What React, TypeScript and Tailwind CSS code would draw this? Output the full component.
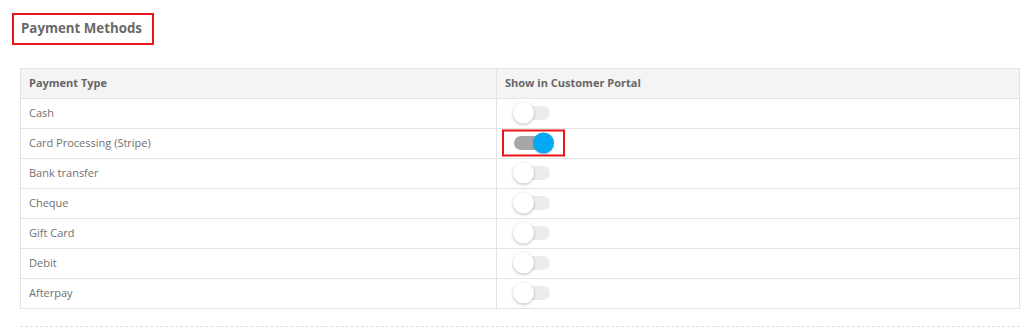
import React from 'react';

type Method = { name: string; enabled: boolean; highlight?: boolean };

const methods: Method[] = [
  { name: 'Cash', enabled: false },
  { name: 'Card Processing (Stripe)', enabled: true, highlight: true },
  { name: 'Bank transfer', enabled: false },
  { name: 'Cheque', enabled: false },
  { name: 'Gift Card', enabled: false },
  { name: 'Debit', enabled: false },
  { name: 'Afterpay', enabled: false },
];

function Toggle({ on }: { on: boolean }) {
  return (
    <span
      className={`relative inline-block w-[36px] h-[14px] rounded-full align-middle ${
        on ? 'bg-[#a6a6a6]' : 'bg-[#ececec]'
      }`}
    >
      <span
        className={`absolute top-1/2 -translate-y-1/2 w-[21px] h-[21px] rounded-full ${
          on
            ? 'left-[19px] bg-[#03a9f4] shadow-[0_1px_2px_rgba(0,0,0,0.2)]'
            : 'left-[-1px] bg-white shadow-[0_1px_3px_rgba(0,0,0,0.28)]'
        }`}
      />
    </span>
  );
}

export default function App() {
  return (
    <div className="w-[1024px] h-[330px] bg-white font-['Open_Sans',sans-serif] text-[#666] overflow-hidden">
      {/* Section title (annotated with red box) */}
      <div className="pt-[13px] pl-3">
        <div className="w-[142px] h-[32px] border-2 border-[#e8161b] flex items-center pl-[7px]">
          <h2 className="text-[13.3px] font-bold text-[#6a6a6a] leading-none">Payment Methods</h2>
        </div>
      </div>

      <div className="ml-5 mt-[23px] w-[1000px]">
        <table className="w-full border-collapse text-[11px]">
          <thead>
            <tr className="bg-[#f4f4f4] h-[30px]">
              <th className="w-[476px] border border-[#e3e3e3] pl-2 text-left font-bold text-[#666]">
                Payment Type
              </th>
              <th className="border border-[#e3e3e3] pl-2 text-left font-bold text-[#666]">
                Show in Customer Portal
              </th>
            </tr>
          </thead>
          <tbody>
            {methods.map((m) => (
              <tr key={m.name} className="h-[30px]">
                <td className="border border-[#e3e3e3] pl-2 text-[#707070]">{m.name}</td>
                <td className="border border-[#e3e3e3] pl-[17px]">
                  <span className="relative inline-flex items-center h-[21px]">
                    <Toggle on={m.enabled} />
                    {m.highlight && (
                      <span className="absolute left-[-12px] top-1/2 -translate-y-1/2 w-[63px] h-[27px] border-2 border-[#e8161b]" />
                    )}
                  </span>
                </td>
              </tr>
            ))}
          </tbody>
        </table>
        <div className="mt-[17px] border-t border-dashed border-[#e0e0e0]" />
      </div>
    </div>
  );
}
